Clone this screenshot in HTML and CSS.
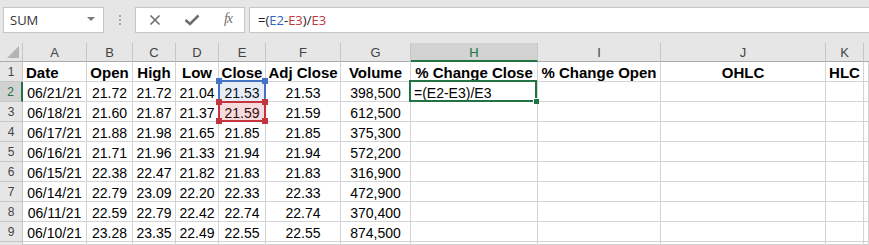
FILE: index.html
```html
<!DOCTYPE html>
<html>
<head>
<meta charset="utf-8">
<link rel="stylesheet" href="styles.css">
</head>
<body>
<div class="app">
  <div class="toolbar">
    <div class="namebox">
      <span class="name">SUM</span>
      <span class="caret"></span>
    </div>
    <div class="grip"><i></i><i></i><i></i></div>
    <div class="fxbox">
      <svg class="ico" width="12" height="12" viewBox="0 0 12 12"><path d="M1.5 1.5 L10.5 10.5 M10.5 1.5 L1.5 10.5" stroke="#6e6e6e" stroke-width="1.6" fill="none"/></svg>
      <svg class="ico" width="16" height="12" viewBox="0 0 16 12"><path d="M1.5 6 L6 10 L14.5 1.5" stroke="#6e6e6e" stroke-width="2.6" fill="none"/></svg>
      <span class="fx">fx</span>
    </div>
    <div class="formula">=(<span class="ref-b">E2</span>-<span class="ref-r">E3</span>)/<span class="ref-r">E3</span></div>
  </div>

  <div class="sheet">
    <div class="corner"><span class="tri"></span></div>
    <div class="ch">A</div><div class="ch">B</div><div class="ch">C</div><div class="ch">D</div><div class="ch">E</div><div class="ch">F</div><div class="ch">G</div><div class="ch ch-sel">H</div><div class="ch">I</div><div class="ch">J</div><div class="ch">K</div><div class="ch ch-last"></div>

    <div class="rh">1</div>
    <div class="c b left">Date</div><div class="c b">Open</div><div class="c b">High</div><div class="c b">Low</div><div class="c b">Close</div><div class="c b">Adj Close</div><div class="c b">Volume</div><div class="c b">% Change Close</div><div class="c b">% Change Open</div><div class="c b">OHLC</div><div class="c b">HLC</div><div class="c"></div>

    <div class="rh rh-sel">2</div>
    <div class="c">06/21/21</div><div class="c">21.72</div><div class="c">21.72</div><div class="c">21.04</div>
    <div class="c ref-cell">21.53<span class="sel sel-blue"><i class="h tl"></i><i class="h tr"></i></span></div>
    <div class="c">21.53</div><div class="c">398,500</div>
    <div class="c left edit">=(E2-E3)/E3<span class="sel sel-green"><i class="fill"></i></span></div>
    <div class="c"></div><div class="c"></div><div class="c"></div><div class="c"></div>

    <div class="rh">3</div>
    <div class="c">06/18/21</div><div class="c">21.60</div><div class="c">21.87</div><div class="c">21.37</div>
    <div class="c ref-cell">21.59<span class="sel sel-red"><i class="h tl"></i><i class="h tr"></i><i class="h bl"></i><i class="h br"></i></span></div>
    <div class="c">21.59</div><div class="c">612,500</div>
    <div class="c"></div><div class="c"></div><div class="c"></div><div class="c"></div><div class="c"></div>

    <div class="rh">4</div>
    <div class="c">06/17/21</div><div class="c">21.88</div><div class="c">21.98</div><div class="c">21.65</div><div class="c">21.85</div><div class="c">21.85</div><div class="c">375,300</div>
    <div class="c"></div><div class="c"></div><div class="c"></div><div class="c"></div><div class="c"></div>

    <div class="rh">5</div>
    <div class="c">06/16/21</div><div class="c">21.71</div><div class="c">21.96</div><div class="c">21.33</div><div class="c">21.94</div><div class="c">21.94</div><div class="c">572,200</div>
    <div class="c"></div><div class="c"></div><div class="c"></div><div class="c"></div><div class="c"></div>

    <div class="rh">6</div>
    <div class="c">06/15/21</div><div class="c">22.38</div><div class="c">22.47</div><div class="c">21.82</div><div class="c">21.83</div><div class="c">21.83</div><div class="c">316,900</div>
    <div class="c"></div><div class="c"></div><div class="c"></div><div class="c"></div><div class="c"></div>

    <div class="rh">7</div>
    <div class="c">06/14/21</div><div class="c">22.79</div><div class="c">23.09</div><div class="c">22.20</div><div class="c">22.33</div><div class="c">22.33</div><div class="c">472,900</div>
    <div class="c"></div><div class="c"></div><div class="c"></div><div class="c"></div><div class="c"></div>

    <div class="rh">8</div>
    <div class="c">06/11/21</div><div class="c">22.59</div><div class="c">22.79</div><div class="c">22.42</div><div class="c">22.74</div><div class="c">22.74</div><div class="c">370,400</div>
    <div class="c"></div><div class="c"></div><div class="c"></div><div class="c"></div><div class="c"></div>

    <div class="rh">9</div>
    <div class="c">06/10/21</div><div class="c">23.28</div><div class="c">23.35</div><div class="c">22.49</div><div class="c">22.55</div><div class="c">22.55</div><div class="c">874,500</div>
    <div class="c"></div><div class="c"></div><div class="c"></div><div class="c"></div><div class="c"></div>

    <div class="rh rh-stub"></div>
    <div class="c"></div><div class="c"></div><div class="c"></div><div class="c"></div><div class="c"></div><div class="c"></div><div class="c"></div>
    <div class="c"></div><div class="c"></div><div class="c"></div><div class="c"></div><div class="c"></div>
  </div>
</div>
</body>
</html>
```

FILE: styles.css
```css
* { box-sizing: border-box; }
html, body { margin: 0; padding: 0; }
body {
  background: #e6e6e6;
  width: 869px;
  height: 245px;
  overflow: hidden;
}
.app { display: flex; flex-direction: column; }

/* toolbar */
.toolbar {
  height: 43px;
  display: flex;
  align-items: flex-start;
  padding-top: 7px;
  padding-left: 3px;
}
.namebox {
  width: 101px;
  height: 26px;
  background: #fff;
  border: 1px solid #c6c6c6;
  display: flex;
  align-items: center;
  justify-content: space-between;
  padding: 0 8px 0 6px;
  font-family: "Open Sans", "Liberation Sans", sans-serif;
  font-size: 13px;
  color: #333;
}
.caret {
  width: 0; height: 0;
  border-left: 4px solid transparent;
  border-right: 4px solid transparent;
  border-top: 4px solid #7a7a7a;
  margin-top: -2px;
}
.grip {
  width: 31px;
  height: 26px;
  display: flex;
  flex-direction: column;
  align-items: center;
  justify-content: center;
  gap: 2px;
}
.grip i { display: block; width: 2px; height: 2px; background: #a8a8a8; }
.fxbox {
  width: 110px;
  height: 26px;
  background: #fff;
  border: 1px solid #c6c6c6;
  display: flex;
  align-items: center;
  justify-content: space-between;
  padding: 0 12px 0 13px;
}
.ico { display: block; }
.fx {
  font-family: "Liberation Serif", serif;
  font-style: italic;
  font-size: 14px;
  color: #6e6e6e;
  letter-spacing: -1px;
  margin-top: -2px;
}
.formula {
  flex: 1;
  height: 26px;
  margin-left: 4px;
  background: #fff;
  border: 1px solid #c6c6c6;
  border-right: none;
  font-family: "Open Sans", "Liberation Sans", sans-serif;
  font-size: 13px;
  color: #222;
  padding-left: 8px;
  line-height: 24px;
}
.ref-b { color: #2f66c6; }
.ref-r { color: #c4343f; }

/* sheet */
.sheet {
  display: grid;
  grid-template-columns: 23px 64px 46px 43px 43px 47px 75px 70px 127px 123px 165px 38px 1fr;
  grid-template-rows: 19px repeat(9, 20px) 3px;
  background: #fff;
}
.corner {
  background: #e6e6e6;
  border-right: 1px solid #c6c6c6;
  border-bottom: 1px solid #ababab;
  position: relative;
}
.tri {
  position: absolute;
  right: 3px;
  bottom: 3px;
  width: 0; height: 0;
  border-left: 12px solid transparent;
  border-bottom: 12px solid #b4b4b4;
}
.ch {
  background: #e6e6e6;
  border-right: 1px solid #c6c6c6;
  border-bottom: 1px solid #ababab;
  font-family: "Liberation Sans", Arial, sans-serif;
  font-size: 13px;
  color: #444;
  display: flex;
  align-items: center;
  justify-content: center;
  padding-top: 1px;
}
.ch-sel {
  background: #d2d2d2;
  color: #217346;
  border-bottom: 2px solid #217346;
}
.ch-last { border-right: none; }
.rh {
  background: #e6e6e6;
  border-right: 1px solid #c6c6c6;
  border-bottom: 1px solid #c6c6c6;
  font-family: "Liberation Sans", Arial, sans-serif;
  font-size: 12px;
  color: #444;
  display: flex;
  align-items: center;
  justify-content: center;
}
.rh-stub { border-bottom: none; }
.rh-sel {
  background: #d2d2d2;
  color: #217346;
  border-right: 2px solid #217346;
}
.c {
  border-right: 1px solid #d4d4d4;
  border-bottom: 1px solid #d4d4d4;
  font-family: "Liberation Sans", Arial, sans-serif;
  font-size: 14px;
  line-height: 16px;
  color: #000;
  display: flex;
  align-items: flex-end;
  justify-content: center;
  white-space: nowrap;
  position: relative;
}
.c.b { font-weight: bold; font-size: 15px; line-height: 17px; }
.c.left { justify-content: flex-start; padding-left: 3px; }
.edit { padding-left: 4px; }

/* selection overlays */
.sel {
  position: absolute;
  pointer-events: none;
}
.sel-blue {
  left: -1px; top: -2px; width: 48px; height: 21px;
  border: 2px solid #4472c4;
  border-bottom: none;
  background: rgba(68, 114, 196, 0.13);
  z-index: 1;
}
.sel-red {
  left: -1px; top: -1px; width: 48px; height: 21px;
  border: 2px solid #c4343f;
  background: rgba(214, 70, 80, 0.2);
  z-index: 2;
}
.sel-green {
  left: -2px; top: -2px; width: 128px; height: 22px;
  border: 2px solid #217346;
  z-index: 3;
}
.h {
  position: absolute;
  width: 6px; height: 6px;
}
.sel-blue .h { background: #4472c4; }
.sel-red .h { background: #c4343f; }
.h.tl { left: -4px; top: -4px; }
.h.tr { right: -4px; top: -4px; }
.h.bl { left: -4px; bottom: -4px; }
.h.br { right: -4px; bottom: -4px; }
.fill {
  position: absolute;
  right: -4px; bottom: -4px;
  width: 6px; height: 6px;
  background: #217346;
  border: 1px solid #fff;
  border-right: none;
  border-bottom: none;
}
```
